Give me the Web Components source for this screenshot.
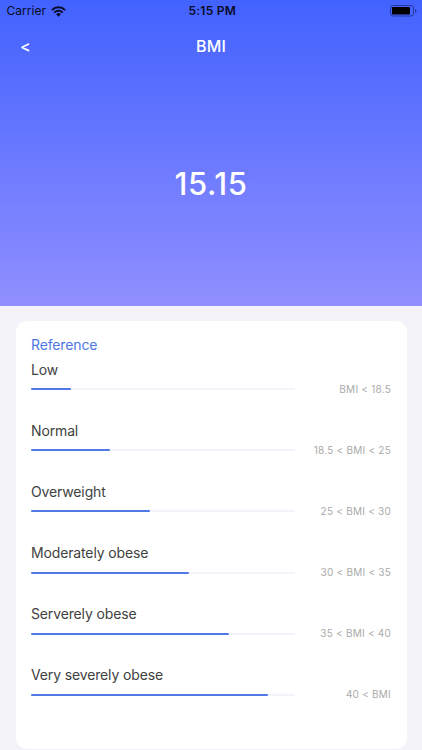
<!DOCTYPE html>
<html lang="en">
<head>
<meta charset="UTF-8">
<meta name="viewport" content="width=device-width, initial-scale=1">
<title>BMI</title>
<style>
    html, body {
        margin: 0;
        height: 100%;
        overflow: hidden;
        background: #f3f3f9;
        font-family: Inter, "Liberation Sans", sans-serif;
    }
</style>
</head>
<body>
<bmi-screen></bmi-screen>
<script>
class StatusBar extends HTMLElement {
    connectedCallback() {
        this.attachShadow({ mode: 'open' });
        this.shadowRoot.innerHTML = `
            <style>
                :host {
                    display: grid;
                    grid-template-columns: 1fr auto 1fr;
                    align-items: center;
                    height: 22px;
                    padding: 0 5px 0 6.5px;
                    color: #080c28;
                    font-size: 12px;
                    line-height: 22px;
                }
                .carrier {
                    display: flex;
                    align-items: center;
                    gap: 5px;
                    letter-spacing: 0.05px;
                }
                .time {
                    padding-left: 1px;
                    font-weight: 600;
                    letter-spacing: 0.25px;
                }
                .battery {
                    justify-self: end;
                }
                svg {
                    display: block;
                }
            </style>
            <div class="carrier">
                <span>Carrier</span>
                <svg width="15" height="11" viewBox="0 0 15 11" fill="none" stroke="currentColor" stroke-width="2">
                    <path d="M.9 4.1a9.3 9.3 0 0 1 13.2 0"/>
                    <path d="M3.3 6.6a5.9 5.9 0 0 1 8.4 0"/>
                    <path d="M7.5 10.7 5.1 8.3a3.4 3.4 0 0 1 4.8 0z" fill="currentColor" stroke="none"/>
                </svg>
            </div>
            <div class="time">5:15 PM</div>
            <svg class="battery" width="27" height="12" viewBox="0 0 27 12">
                <rect x="0.5" y="0.5" width="23" height="10.5" rx="2.6" fill="none" stroke="#2438a0"/>
                <rect x="2" y="2" width="18" height="7.5" rx="1" fill="#000"/>
                <path d="M25 4v3.8q1.5-.6 1.5-1.9T25 4z" fill="#2438a0"/>
            </svg>
        `;
    }
}
customElements.define('status-bar', StatusBar);

class NavBar extends HTMLElement {
    connectedCallback() {
        this.attachShadow({ mode: 'open' });
        this.shadowRoot.innerHTML = `
            <style>
                :host {
                    display: grid;
                    grid-template-columns: 1fr auto 1fr;
                    align-items: center;
                    height: 48px;
                    padding: 0 20px;
                    color: #fff;
                }
                .back {
                    justify-self: start;
                    padding: 0;
                    border: 0;
                    background: none;
                    color: inherit;
                    font: 500 16px/20px Inter, "Liberation Sans", sans-serif;
                }
                .title {
                    font-size: 16px;
                    font-weight: 500;
                    line-height: 20px;
                    letter-spacing: 0.15px;
                }
            </style>
            <button class="back" aria-label="Back">&lt;</button>
            <div class="title"><slot></slot></div>
        `;
    }
}
customElements.define('nav-bar', NavBar);

class BmiHero extends HTMLElement {
    connectedCallback() {
        this.attachShadow({ mode: 'open' });
        this.shadowRoot.innerHTML = `
            <style>
                :host {
                    display: flex;
                    flex-direction: column;
                    height: 305.5px;
                    background: linear-gradient(#4262ff, #918fff);
                }
                .value {
                    margin-top: 94px;
                    color: #fff;
                    font-size: 31px;
                    font-weight: 550;
                    line-height: 40px;
                    letter-spacing: 0.6px;
                    text-align: center;
                }
            </style>
            <status-bar></status-bar>
            <nav-bar>BMI</nav-bar>
            <div class="value"><slot></slot></div>
        `;
    }
}
customElements.define('bmi-hero', BmiHero);

class BmiRange extends HTMLElement {
    connectedCallback() {
        this.attachShadow({ mode: 'open' });
        this.shadowRoot.innerHTML = `
            <style>
                :host {
                    display: block;
                    height: 61.1px;
                }
                .label {
                    color: #414141;
                    font-size: 14px;
                    line-height: 25px;
                    letter-spacing: -0.14px;
                }
                .row {
                    display: flex;
                    align-items: center;
                    justify-content: space-between;
                    height: 14.6px;
                }
                .track {
                    width: 263.5px;
                    height: 2px;
                    border-radius: 1px;
                    background: #f3f4fb;
                }
                .fill {
                    width: ${this.getAttribute('percent')}%;
                    height: 2px;
                    border-radius: 1px;
                    background: #5078e8;
                }
                .limits {
                    color: #aaa;
                    font-size: 10px;
                    line-height: 15px;
                    letter-spacing: 0.23px;
                    white-space: nowrap;
                }
            </style>
            <div class="label">${this.getAttribute('label')}</div>
            <div class="row">
                <div class="track"><div class="fill"></div></div>
                <div class="limits"><slot></slot></div>
            </div>
        `;
    }
}
customElements.define('bmi-range', BmiRange);

class ReferenceCard extends HTMLElement {
    connectedCallback() {
        this.attachShadow({ mode: 'open' });
        this.shadowRoot.innerHTML = `
            <style>
                :host {
                    display: block;
                    box-sizing: border-box;
                    height: 428px;
                    margin: 15.5px 15.5px 0;
                    padding: 12px 15.5px 0;
                    border-radius: 11px;
                    background: #fff;
                }
                .heading {
                    color: #4f78e6;
                    font-size: 14px;
                    line-height: 24px;
                    letter-spacing: -0.14px;
                }
            </style>
            <div class="heading">Reference</div>
            <slot></slot>
        `;
    }
}
customElements.define('reference-card', ReferenceCard);

class BmiScreen extends HTMLElement {
    connectedCallback() {
        this.attachShadow({ mode: 'open' });
        this.shadowRoot.innerHTML = `
            <style>
                :host {
                    display: flex;
                    flex-direction: column;
                    height: 750px;
                }
            </style>
            <bmi-hero>15.15</bmi-hero>
            <reference-card>
                <bmi-range label="Low" percent="15">BMI &lt; 18.5</bmi-range>
                <bmi-range label="Normal" percent="30">18.5 &lt; BMI &lt; 25</bmi-range>
                <bmi-range label="Overweight" percent="45">25 &lt; BMI &lt; 30</bmi-range>
                <bmi-range label="Moderately obese" percent="60">30 &lt; BMI &lt; 35</bmi-range>
                <bmi-range label="Serverely obese" percent="75">35 &lt; BMI &lt; 40</bmi-range>
                <bmi-range label="Very severely obese" percent="90">40 &lt; BMI</bmi-range>
            </reference-card>
        `;
    }
}
customElements.define('bmi-screen', BmiScreen);
</script>
</body>
</html>
